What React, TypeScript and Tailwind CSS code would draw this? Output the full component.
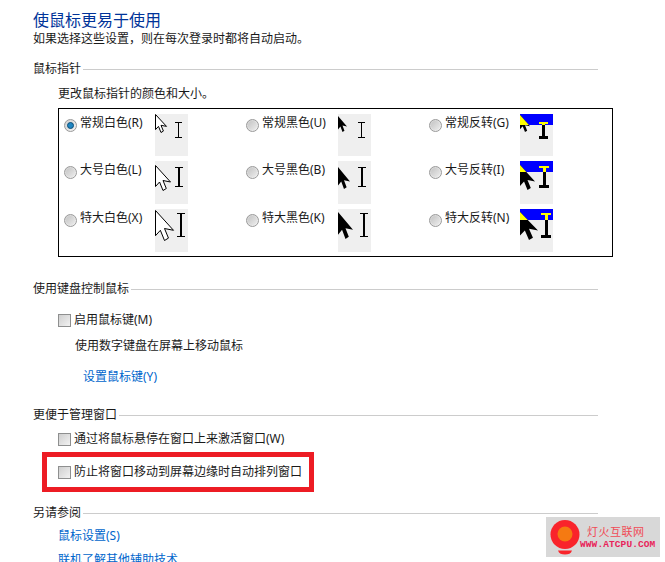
import React from "react";

type Kind = "white" | "black" | "invert";
type Size = "normal" | "large" | "xl";

const geometry: Record<Kind, Record<Size, { a: number[]; i: number[] }>> = {
  // a: x, y, w, h of the arrow; i: x, y, w, h, stem of the I-beam (relative to the preview)
  white: {
    normal: { a: [0.5, 0.5, 11, 18], i: [20, 8, 7, 16, 1] },
    large: { a: [0.5, 4.5, 15, 25], i: [20, 6, 8, 20, 2] },
    xl: { a: [0.5, 1.5, 18, 30], i: [22, 4, 8, 24, 2] },
  },
  black: {
    normal: { a: [0, 2, 9, 16], i: [20, 8, 7, 16, 1] },
    large: { a: [0, 6, 12, 22], i: [20, 6, 8, 20, 2] },
    xl: { a: [0, 3, 15, 27], i: [22, 4, 8, 24, 2] },
  },
  invert: {
    normal: { a: [0, 1, 10, 17], i: [19, 8, 9, 17, 3] },
    large: { a: [0, 4, 15, 25], i: [19, 5, 10, 22, 3] },
    xl: { a: [0, 3, 18, 28], i: [21, 4, 10, 25, 3] },
  },
};

function arrowPoints(x: number, y: number, w: number, h: number) {
  const pts = [
    [0, 0],
    [0, 0.84],
    [0.27, 0.66],
    [0.5, 1],
    [0.72, 0.92],
    [0.5, 0.6],
    [1, 0.66],
  ];
  return pts.map(([px, py]) => `${x + px * w},${y + py * h}`).join(" ");
}

function Preview({ kind, size }: { kind: Kind; size: Size }) {
  const height = size === "normal" ? 42 : 43;
  const { a, i } = geometry[kind][size];
  const [ax, ay, aw, ah] = a;
  const [ix, iy, iw, ih, stem] = i;
  const band = 11;
  const thick = kind === "invert" ? 2 : 1;
  const stemX = ix + (iw - stem) / 2;
  const yTri = band - ay;
  return (
    <svg width={33} height={height} viewBox={`0 0 33 ${height}`} className="block shrink-0 bg-[#efefef]">
      {kind === "invert" && <rect x={0} y={0} width={33} height={band} fill="#0000ff" />}
      <polygon
        points={arrowPoints(ax, ay, aw, ah)}
        fill={kind === "white" ? "#ffffff" : "#000000"}
        stroke={kind === "white" ? "#000000" : "none"}
        strokeWidth={1}
      />
      {kind === "invert" && (
        <polygon
          points={`${ax},${ay} ${ax},${ay + yTri} ${ax + (yTri * aw) / (0.66 * ah)},${ay + yTri}`}
          fill="#ffff00"
        />
      )}
      <g shapeRendering="crispEdges">
        <rect x={ix} y={iy} width={iw} height={thick} fill={kind === "invert" ? "#ffff00" : "#000000"} />
        <rect x={stemX} y={iy} width={stem} height={ih} fill="#000000" />
        {kind === "invert" && <rect x={stemX} y={iy} width={stem} height={band - iy} fill="#ffff00" />}
        <rect x={ix} y={iy + ih - thick - (kind === "invert" ? 1 : 0)} width={iw} height={kind === "invert" ? 3 : thick} fill="#000000" />
      </g>
    </svg>
  );
}

function Radio({ checked }: { checked?: boolean }) {
  return (
    <span className="flex h-[13px] w-[13px] shrink-0 items-center justify-center rounded-full border border-[#9a9a9a] bg-gradient-to-br from-[#d0d0d0] to-[#f4f4f4]">
      {checked ? (
        <span className="block h-[7px] w-[7px] rounded-full border border-[#0d4f78] bg-[#1f86c2]" />
      ) : (
        <span className="block h-[9px] w-[9px] rounded-full bg-gradient-to-br from-[#c4c4c4] to-[#ececec]" />
      )}
    </span>
  );
}

function Option({ label, kind, size, checked, labelW }: { label: string; kind: Kind; size: Size; checked?: boolean; labelW: string }) {
  return (
    <div className="flex items-start">
      <div className={`flex items-start ${labelW}`}>
        <span className="mt-[5px]">
          <Radio checked={checked} />
        </span>
        <span className="ml-[3px] mt-[1px] whitespace-nowrap text-[12px] leading-[16px] text-[#1a1a1a]">{label}</span>
      </div>
      <Preview kind={kind} size={size} />
    </div>
  );
}

function Header({ children }: { children: React.ReactNode }) {
  return (
    <div className="flex h-[16px] items-center text-[12px] leading-[16px] text-[#1a1a1a]">
      <span className="whitespace-nowrap">{children}</span>
      <span className="ml-[2px] h-px flex-1 bg-[#cccccc]" />
    </div>
  );
}

function Check({ label }: { label: string }) {
  return (
    <div className="flex h-[16px] items-center">
      <span className="flex h-[13px] w-[13px] shrink-0 items-center justify-center border border-[#8e8f8f] bg-white">
        <span className="block h-[11px] w-[11px] bg-gradient-to-br from-[#cfcfcf] to-[#f2f2f2]" />
      </span>
      <span className="ml-[3px] whitespace-nowrap text-[12px] leading-[16px] text-[#1a1a1a]">{label}</span>
    </div>
  );
}

const rows: { label: string; kind: Kind; size: Size; checked?: boolean }[][] = [
  [
    { label: "常规白色(R)", kind: "white", size: "normal", checked: true },
    { label: "常规黑色(U)", kind: "black", size: "normal" },
    { label: "常规反转(G)", kind: "invert", size: "normal" },
  ],
  [
    { label: "大号白色(L)", kind: "white", size: "large" },
    { label: "大号黑色(B)", kind: "black", size: "large" },
    { label: "大号反转(I)", kind: "invert", size: "large" },
  ],
  [
    { label: "特大白色(X)", kind: "white", size: "xl" },
    { label: "特大黑色(K)", kind: "black", size: "xl" },
    { label: "特大反转(N)", kind: "invert", size: "xl" },
  ],
];

export default function App() {
  return (
    <div className="relative h-[562px] w-[665px] overflow-hidden bg-white font-['Noto_Sans','Noto_Sans_CJK_SC',sans-serif]">
      <div className="w-[598px] pl-[33px] pt-[10px]">
        <h1 className="text-[16px] leading-[20px] font-normal text-[#003399]">使鼠标更易于使用</h1>
        <p className="mt-[1px] text-[12px] leading-[16px] text-[#1a1a1a]">如果选择这些设置，则在每次登录时都将自动启动。</p>

        <div className="mt-[14px]">
          <Header>鼠标指针</Header>
        </div>

        <div className="pl-[25px]">
          <p className="mt-[9px] text-[12px] leading-[16px] text-[#1a1a1a]">更改鼠标指针的颜色和大小。</p>
          <div className="mt-[6px] flex w-[555px] flex-col gap-[5px] border border-black pb-[4px] pl-[5px] pt-[5px]">
            {rows.map((row, r) => (
              <div key={r} className="flex">
                <div className="w-[182px]">
                  <Option {...row[0]} labelW="w-[91px]" />
                </div>
                <div className="w-[183px]">
                  <Option {...row[1]} labelW="w-[92px]" />
                </div>
                <div>
                  <Option {...row[2]} labelW="w-[91px]" />
                </div>
              </div>
            ))}
          </div>
        </div>

        <div className="mt-[24px]">
          <Header>使用键盘控制鼠标</Header>
        </div>
        <div className="mt-[15px] pl-[25px]">
          <Check label="启用鼠标键(M)" />
          <p className="ml-[17px] mt-[10px] text-[12px] leading-[16px] text-[#1a1a1a]">使用数字键盘在屏幕上移动鼠标</p>
          <a className="ml-[25px] mt-[15px] block text-[12px] leading-[16px] text-[#0066cc]">设置鼠标键(Y)</a>
        </div>

        <div className="mt-[22px]">
          <Header>更便于管理窗口</Header>
        </div>
        <div className="mt-[8px] pl-[25px]">
          <Check label="通过将鼠标悬停在窗口上来激活窗口(W)" />
          <div className="-ml-[16px] mt-[5px] h-[40px] w-[272px] border-[5px] border-[#ed1c24] pl-[11px] pt-[7px]">
            <Check label="防止将窗口移动到屏幕边缘时自动排列窗口" />
          </div>
        </div>

        <div className="mt-[13px]">
          <Header>另请参阅</Header>
        </div>
        <div className="pl-[25px]">
          <a className="mt-[7px] block text-[12px] leading-[16px] text-[#0066cc]">鼠标设置(S)</a>
          <a className="mt-[8px] block whitespace-nowrap text-[12px] leading-[16px] text-[#0066cc]">联机了解其他辅助技术</a>
        </div>
      </div>

      <div className="absolute left-[546px] top-[517px] flex h-[40px] w-[114px] items-start bg-[#d8d8d8]">
        <svg width={34} height={40} viewBox="0 0 34 40" className="shrink-0">
          <circle cx={19} cy={17.5} r={14.5} fill="#f9242b" />
          <circle cx={19} cy={17} r={7.5} fill="#f57a12" />
          <path d="M12 33.5h14c-1 3-3.5 4-7 4s-6-1-7-4z" fill="#f9242b" />
        </svg>
        <div className="flex flex-col">
          <span className="ml-[7px] mt-[8px] whitespace-nowrap text-[11px] leading-[13px] tracking-[0.5px] text-[#f04a55]">灯火互联网</span>
          <span className="mt-[1px] whitespace-nowrap font-['Liberation_Mono',monospace] text-[9.5px] font-bold leading-[11px] tracking-[0.1px] text-[#e8245a]">WWW.ATCPU.COM</span>
        </div>
      </div>
    </div>
  );
}
